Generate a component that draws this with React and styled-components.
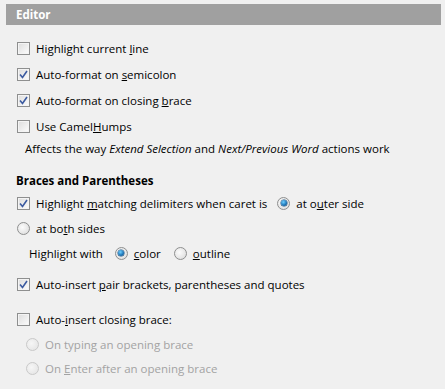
import styled, { createGlobalStyle } from "styled-components";

const Global = createGlobalStyle`
  body {
    margin: 0;
    background: #f0f0f0;
    font-family: "Open Sans", "Noto Sans", sans-serif;
    font-size: 11.5px;
    color: #000;
  }
`;

const Panel = styled.div`
  width: 445px;
  height: 389px;
  overflow: hidden;
`;

const Header = styled.div`
  margin: 4px 4px 0 6px;
  height: 21px;
  background: #a0a0a0;
  color: #fff;
  font-weight: bold;
  display: flex;
  align-items: center;
  padding-left: 10px;
`;

const Body = styled.div`
  padding-left: 17px;
`;

const Row = styled.div`
  display: flex;
  align-items: center;
  height: ${p => p.$h || 26}px;
  margin-top: ${p => p.$mt || 0}px;
  padding-left: ${p => p.$pl || 0}px;
  color: ${p => (p.$disabled ? "#a3a3a3" : "#000")};
  white-space: nowrap;
`;

const Title = styled.div`
  font-weight: bold;
  height: 18px;
  display: flex;
  align-items: center;
  margin-top: ${p => p.$mt || 0}px;
  margin-left: -1px;
`;

const Note = styled.div`
  height: 18px;
  display: flex;
  align-items: center;
  padding-left: 8px;
  white-space: nowrap;
`;

const Box = styled.span`
  width: 11px;
  height: 11px;
  border: 1px solid #8e8f8f;
  background: linear-gradient(135deg, #dcdcdc, #fdfdfd);
  box-shadow: inset 0 0 0 1px #f4f4f4;
  margin-right: 6px;
  flex-shrink: 0;
  display: flex;
  align-items: center;
  justify-content: center;
`;

const Radio = styled.span`
  width: 11px;
  height: 11px;
  border: 1px solid ${p => (p.$disabled ? "#c9c9c9" : "#8e8f8f")};
  border-radius: 50%;
  background: ${p =>
    p.$disabled
      ? "radial-gradient(circle at 40% 40%, #f6f6f6, #e2e2e2)"
      : "radial-gradient(circle at 40% 40%, #fcfcfc, #d8d8d8)"};
  margin-right: 6px;
  margin-left: ${p => p.$ml || 0}px;
  flex-shrink: 0;
  display: flex;
  align-items: center;
  justify-content: center;
`;

const Dot = styled.span`
  width: 6px;
  height: 6px;
  border-radius: 50%;
  background: radial-gradient(circle at 40% 35%, #6fd0ff, #1a72b5 60%, #0d3e6e);
  box-shadow: 0 0 0 0.5px #174e7c;
`;

const Check = () => (
  <svg width="9" height="9" viewBox="0 0 9 9">
    <path d="M1 4.5 L3.5 7.5 L8 1" fill="none" stroke="#3b5aa0" strokeWidth="1.6" />
  </svg>
);

const CheckRow = ({ checked, children, mt, h }) => (
  <Row $mt={mt} $h={h}>
    <Box>{checked && <Check />}</Box>
    <span>{children}</span>
  </Row>
);

export default function App() {
  return (
    <Panel>
      <Global />
      <Header>Editor</Header>
      <Body>
        <CheckRow mt={10}>Highlight current <u>l</u>ine</CheckRow>
        <CheckRow checked>Auto-format on <u>s</u>emicolon</CheckRow>
        <CheckRow checked>Auto-format on closing <u>b</u>race</CheckRow>
        <CheckRow>Use Camel<u>H</u>umps</CheckRow>
        <Note>
          Affects the way&nbsp;<i>Extend Selection</i>&nbsp;and&nbsp;<i>Next/Previous Word</i>&nbsp;actions work
        </Note>
        <Title $mt={14}>Braces and Parentheses</Title>
        <Row $mt={1}>
          <Box><Check /></Box>
          <span>Highlight <u>m</u>atching delimiters when caret is</span>
          <Radio $ml={10}><Dot /></Radio>
          <span>at o<u>u</u>ter side</span>
        </Row>
        <Row $h={24}>
          <Radio />
          <span>at bo<u>t</u>h sides</span>
        </Row>
        <Row $pl={12}>
          <span>Highlight with</span>
          <Radio $ml={12}><Dot /></Radio>
          <span><u>c</u>olor</span>
          <Radio $ml={13} />
          <span><u>o</u>utline</span>
        </Row>
        <CheckRow checked mt={5}>Auto-insert <u>p</u>air brackets, parentheses and quotes</CheckRow>
        <CheckRow mt={9}>Auto-<u>i</u>nsert closing brace:</CheckRow>
        <Row $h={24} $pl={9} $disabled>
          <Radio $disabled />
          <span>On typing an opening brace</span>
        </Row>
        <Row $h={25} $pl={9} $disabled>
          <Radio $disabled />
          <span>On <u>E</u>nter after an opening brace</span>
        </Row>
      </Body>
    </Panel>
  );
}
